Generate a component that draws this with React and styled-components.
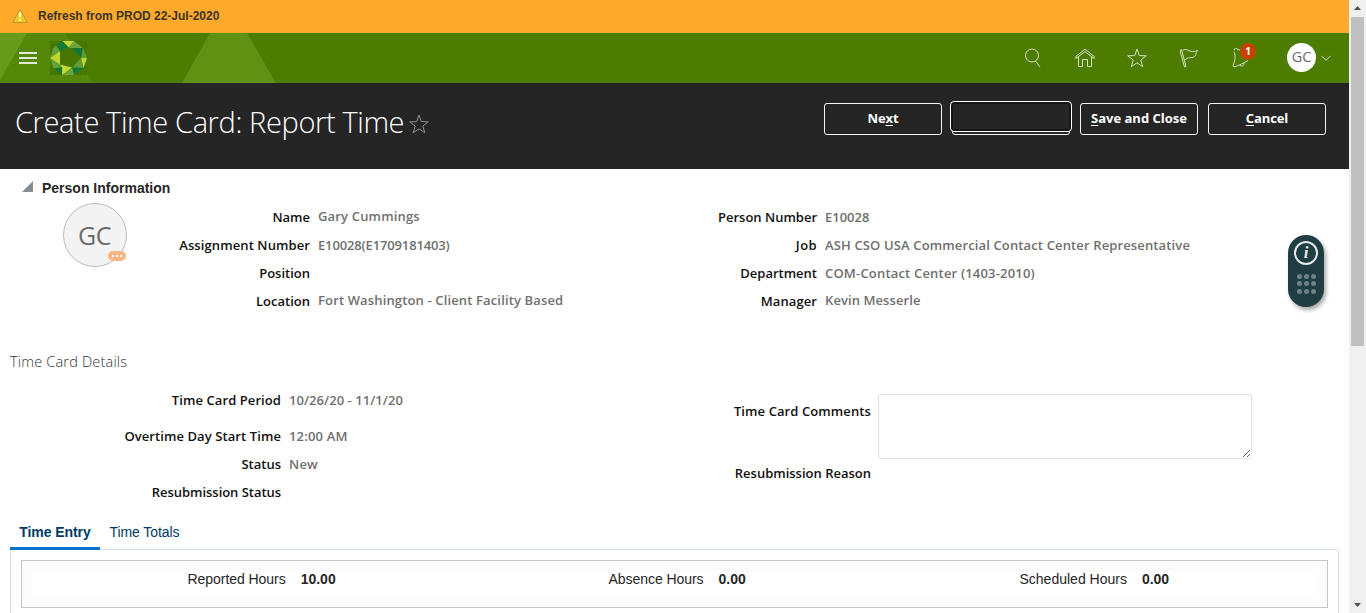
import React from "react";
import styled, { createGlobalStyle } from "styled-components";

const GlobalStyle = createGlobalStyle`
  *, *::before, *::after { box-sizing: border-box; }
  html, body { margin: 0; padding: 0; overflow: hidden; background: #fff; }
  body { font-family: "Liberation Sans", Arial, sans-serif; font-size: 14px; color: #262626; }
`;

const SEGOE = '"Open Sans", "Noto Sans", sans-serif';

const Shell = styled.div`
  display: flex;
  width: 1366px;
  height: 613px;
  overflow: hidden;
`;

const Page = styled.div`
  position: relative;
  width: 1349px;
  height: 613px;
  overflow: hidden;
`;

const Banner = styled.div`
  display: flex;
  align-items: center;
  height: 33px;
  padding: 0 0 2px 12px;
  gap: 10px;
  background: #ffaa2b;
  font-size: 12px;
  font-weight: bold;
  color: #3c3527;
`;

const NavBar = styled.nav`
  position: relative;
  display: flex;
  align-items: center;
  justify-content: space-between;
  height: 50px;
  padding: 0 18px 0 19px;
  background: #4c7d00;
`;

const NavBackdrop = styled.svg`
  position: absolute;
  left: 0;
  top: 0;
`;

const NavLeft = styled.div`
  position: relative;
  display: flex;
  align-items: center;
  gap: 13px;
`;

const Burger = styled.div`
  display: flex;
  flex-direction: column;
  gap: 3px;
  width: 18px;
`;

const BurgerLine = styled.span`
  height: 2px;
  background: #e3ebd8;
`;

const NavIcons = styled.div`
  position: relative;
  display: flex;
  align-items: center;
  padding-bottom: 1px;
`;

const IconSlot = styled.div`
  position: relative;
  display: flex;
  justify-content: center;
  align-items: center;
  width: 52px;
  height: 24px;
`;

const CountBadge = styled.span`
  position: absolute;
  left: 25px;
  top: -3px;
  width: 16px;
  height: 17px;
  border-radius: 50%;
  background: #c74200;
  color: #fff;
  font: 700 10px/17px ${SEGOE};
  text-align: center;
`;

const UserMenu = styled.div`
  display: flex;
  align-items: center;
  gap: 5px;
  margin-left: 20px;
`;

const SmallAvatar = styled.div`
  width: 29px;
  height: 29px;
  border-radius: 50%;
  background: #fff;
  color: #6c6c6c;
  font: 400 14.5px/28px ${SEGOE};
  letter-spacing: -0.2px;
  text-align: center;
`;

const TitleBar = styled.header`
  display: flex;
  justify-content: space-between;
  height: 86px;
  padding: 18px 23px 0 15px;
  background: #252525;
`;

const Title = styled.h1`
  display: flex;
  align-items: center;
  gap: 5px;
  height: 44px;
  margin: -1px 0 0;
  color: #fff;
  font: 300 29px/44px ${SEGOE};
  letter-spacing: ${(p) => p.$track || 0}px;
  white-space: nowrap;
  svg { margin-top: 3px; }
`;

const Actions = styled.div`
  display: flex;
  gap: 10px;
  padding-top: 2px;
`;

const ActionButton = styled.button`
  width: 118px;
  height: 32px;
  padding: 0 0 2px;
  border: 1px solid #f4f4f4;
  border-radius: 3px;
  background: #252525;
  color: #fff;
  font: 700 13px/28px ${SEGOE};
  letter-spacing: ${(p) => p.$track || 0}px;
  white-space: nowrap;
  u { text-underline-offset: 2px; }
`;

const FocusedSlot = styled.div`
  position: relative;
  display: flex;
`;

const FocusRing = styled.span`
  position: absolute;
  left: -2px;
  top: -2px;
  width: 122px;
  height: 31px;
  border: 1px solid #fff;
  border-radius: 4px;
  background: #252525;
  box-shadow: inset 0 0 0 2px #141414;
`;

const SectionHead = styled.div`
  display: flex;
  align-items: center;
  gap: 9px;
  height: 34px;
  padding: 4px 0 0 22px;
  font-weight: bold;
  font-size: 14px;
  svg { margin-top: -3px; }
`;

const Person = styled.section`
  display: flex;
  height: 142px;
`;

const AvatarColumn = styled.div`
  width: 127px;
  padding-left: 63px;
`;

const Avatar = styled.div`
  position: relative;
  width: 64px;
  height: 64px;
  padding-right: 1px;
  border: 1px solid #bcbcbc;
  border-radius: 50%;
  background: #f3f3f3;
  color: #6c6c6c;
  font: 400 25px/63px ${SEGOE};
  letter-spacing: -0.5px;
  text-align: center;
`;

const Presence = styled.span`
  position: absolute;
  left: 44px;
  top: 47px;
  display: flex;
  align-items: center;
  justify-content: center;
  gap: 2px;
  width: 18px;
  height: 10px;
  border-radius: 5px;
  background: #fbb582;
`;

const PresenceDot = styled.i`
  width: 2px;
  height: 2px;
  background: #fff;
`;

const Fields = styled.dl`
  width: ${(p) => p.$width}px;
  margin: 0;
  padding-top: ${(p) => p.$top || 0}px;
`;

const FieldRow = styled.div`
  display: flex;
  gap: 8px;
  height: ${(p) => p.$height || 28}px;
  font: 600 13px/28px ${SEGOE};
  white-space: nowrap;
`;

const Label = styled.dt`
  width: ${(p) => p.$width}px;
  color: #111;
  text-align: right;
  letter-spacing: ${(p) => p.$track || 0}px;
`;

const Value = styled.dd`
  margin: ${(p) => -(p.$lift || 0)}px 0 0;
  color: #6f6f6f;
  letter-spacing: ${(p) => p.$track || 0}px;
`;

const SectionTitle = styled.h2`
  height: 33px;
  margin: 0;
  padding-left: 10px;
  color: #333;
  font: 300 14.5px/33px ${SEGOE};
  letter-spacing: ${(p) => p.$track || 0}px;
`;

const Details = styled.section`
  display: flex;
  height: 138px;
`;

const CommentRow = styled.div`
  display: flex;
  gap: 7px;
  height: 65px;
  font: 600 13px/34px ${SEGOE};
`;

const CommentBox = styled.textarea`
  width: 374px;
  height: 65px;
  margin: 0;
  border: 1px solid #dfe4e3;
  border-radius: 2px;
  background: #fff;
  resize: both;
  outline: none;
`;

const TabStrip = styled.div`
  display: flex;
  height: 34px;
  padding-left: 10px;
  position: relative;
`;

const Tab = styled.div`
  width: ${(p) => p.$width}px;
  height: 34px;
  border-bottom: ${(p) => (p.$active ? "3px solid #0572ce" : "0")};
  color: #003a66;
  font-size: 14px;
  line-height: 33px;
  font-weight: ${(p) => (p.$active ? "bold" : "normal")};
  letter-spacing: -0.08px;
  text-align: center;
  white-space: nowrap;
`;

const TabPanel = styled.div`
  width: 1329px;
  height: 70px;
  margin: -1px 0 0 10px;
  padding: 10px;
  border: 1px solid #d6dfe6;
  border-radius: 0 2px 0 0;
`;

const Summary = styled.div`
  width: 1307px;
  height: 48px;
  padding: 10px 10px;
  border: 1px solid #c4c8c9;
  background: #fbfbfb;
`;

const SummaryRow = styled.div`
  display: grid;
  grid-template-columns: 421px 411px 1fr;
  height: 26px;
  padding-left: 155.5px;
  background: #fff;
  line-height: 17px;
`;

const Total = styled.div`
  display: flex;
  gap: 15px;
  letter-spacing: ${(p) => p.$track || 0}px;
  b { letter-spacing: 0; }
`;

const HelpDock = styled.aside`
  position: absolute;
  left: 1288px;
  top: 235px;
  display: flex;
  flex-direction: column;
  align-items: center;
  gap: 9px;
  width: 36px;
  height: 72px;
  padding-top: 6px;
  border-radius: 18px;
  background: #1f3d42;
  box-shadow: 2px 3px 4px rgba(0, 0, 0, 0.35);
`;

const InfoRing = styled.div`
  width: 24px;
  height: 24px;
  border: 2px solid #e4e9ea;
  border-radius: 50%;
  color: #e4e9ea;
  font: italic bold 17px/19px "Liberation Serif", serif;
  text-align: center;
`;

const DotGrid = styled.div`
  display: grid;
  grid-template-columns: repeat(3, 5px);
  gap: 2.4px 2px;
`;

const Dot = styled.i`
  width: 5px;
  height: 5px;
  border-radius: 50%;
  background: #6e8386;
`;

const Scrollbar = styled.div`
  display: flex;
  flex-direction: column;
  align-items: center;
  justify-content: space-between;
  width: 17px;
  height: 613px;
  padding: 0 0 6px;
  background: #f0f0f0;
`;

const ScrollTop = styled.div`
  display: flex;
  flex-direction: column;
  align-items: center;
  gap: 7px;
  padding-top: 6px;
`;

const Thumb = styled.div`
  width: 13px;
  height: 329px;
  background: #c0c0c0;
`;

const stroke = { fill: "none", stroke: "#d5e2c2", strokeWidth: 1 };
const STAR = "M10 1 L12.3 7.6 L19.3 7.8 L13.8 12 L15.8 18.8 L10 14.8 L4.2 18.8 L6.2 12 L0.7 7.8 L7.7 7.6 Z";

const Warning = () => (
  <svg width="16" height="16" viewBox="0 0 16 16">
    <path d="M8 1 L15.3 14.5 H0.7 Z" fill="#f8c51c" stroke="#bd962c" strokeLinejoin="round" />
    <path d="M7 4.6h2v5H7zM7 11h2v2H7z" fill="#fff" />
  </svg>
);

const Logo = () => (
  <svg width="37" height="34" viewBox="0 0 37 34">
    <rect width="37" height="34" fill="#487700" />
    <path d="M12.500 0L19 6.500 10 10 6 4.500Z" fill="#167a35" />
    <path d="M12.500 0H24L19 6.500Z" fill="#c1d72f" />
    <path d="M24 0L33 7H19Z" fill="#6ba43a" />
    <path d="M22 7H33L31.500 17Z" fill="#127534" />
    <path d="M33 7L37 17H31Z" fill="#5e9e38" />
    <path d="M31 17H37L33.500 27Z" fill="#c1d72f" />
    <path d="M31 17L33.500 27 22 26.500Z" fill="#5e9e38" />
    <path d="M22 26.500L33.500 27 24 34Z" fill="#167a35" />
    <path d="M10 23.500L22 26.500 12.500 34Z" fill="#c1d72f" />
    <path d="M22 26.500L24 34H12.500Z" fill="#6ba43a" />
    <path d="M3.500 27.500L12 26V34Z" fill="#127534" />
    <path d="M0 17L10 23.500 12 26 3.500 27.500Z" fill="#64a13b" />
    <path d="M0 17L10 10V23.500Z" fill="#c1d72f" />
    <path d="M3.500 7L6 4.500 10 10 0 17Z" fill="#64a13b" />
  </svg>
);

const Star = ({ size, color }) => (
  <svg width={size} height={size} viewBox="0 0 20 20">
    <path d={STAR} {...stroke} stroke={color} />
  </svg>
);

const Field = ({ label, value, width, track, valueTrack, lift, height }) => (
  <FieldRow $height={height}>
    <Label $width={width} $track={track}>{label}</Label>
    <Value $track={valueTrack} $lift={lift}>{value}</Value>
  </FieldRow>
);

export default function App() {
  return (
    <Shell>
      <GlobalStyle />
      <Page>
        <Banner><Warning />Refresh from PROD 22-Jul-2020</Banner>
        <NavBar>
          <NavBackdrop width="300" height="50">
            <path d="M0 0H65L93 50H0Z" fill="#558808" />
            <path d="M0 0H27L0 47Z" fill="#679a18" />
            <path d="M210 0H247L276 50H182Z" fill="#609112" />
          </NavBackdrop>
          <NavLeft>
            <Burger><BurgerLine /><BurgerLine /><BurgerLine /></Burger>
            <Logo />
          </NavLeft>
          <NavIcons>
            <IconSlot>
              <svg width="20" height="20" viewBox="0 0 20 20">
                <circle cx="9" cy="7.500" r="6.500" {...stroke} /><path d="M12.500 13L17 19" {...stroke} />
              </svg>
            </IconSlot>
            <IconSlot>
              <svg width="20" height="20" viewBox="0 0 20 20">
                <path d="M.8 8.500L10 1.200l9.200 7.300v2L10 3.700.8 10.500ZM3.500 9v9.500h4V11.500h5v7h4V9" {...stroke} />
              </svg>
            </IconSlot>
            <IconSlot><Star size={20} color="#d5e2c2" /></IconSlot>
            <IconSlot>
              <svg width="20" height="20" viewBox="0 0 20 20">
                <path d="M1 2.500L2.500 1.500 7 18.500 5.500 19ZM3.500 2.500C8-1 10 6 18.800 2.500 16 5 18 9 13 9.500 10 10 9 9 6 12" {...stroke} />
              </svg>
            </IconSlot>
            <IconSlot>
              <svg width="20" height="20" viewBox="0 0 20 20">
                <path d="M3.500 2.500a1.600 1.600 0 1 1 3-.8L9 2M3 4C5 8 4 13 2 17.500L3 19C8 17.500 12 15.500 17 12.500M9 17c1 2.500 4.500 1 4-2" {...stroke} />
              </svg>
              <CountBadge>1</CountBadge>
            </IconSlot>
            <UserMenu>
              <SmallAvatar>GC</SmallAvatar>
              <svg width="10" height="6" viewBox="0 0 10 6"><path d="M.5.800L5 5.300 9.500.800" {...stroke} /></svg>
            </UserMenu>
          </NavIcons>
        </NavBar>
        <TitleBar>
          <Title $track={-0.38}>Create Time Card: Report Time<Star size={20} color="#8f8f8f" /></Title>
          <Actions>
            <ActionButton $track={-0.15}>Ne<u>x</u>t</ActionButton>
            <FocusedSlot><ActionButton aria-label="Save" /><FocusRing /></FocusedSlot>
            <ActionButton $track={0}><u>S</u>ave and Close</ActionButton>
            <ActionButton $track={-0.1}><u>C</u>ancel</ActionButton>
          </Actions>
        </TitleBar>
        <SectionHead>
          <svg width="11" height="11"><path d="M11 0V11H0Z" fill="#878d90" /></svg>
          Person Information
        </SectionHead>
        <Person>
          <AvatarColumn>
            <Avatar>GC<Presence><PresenceDot /><PresenceDot /><PresenceDot /></Presence></Avatar>
          </AvatarColumn>
          <Fields $width={510}>
            <Field width={183} label="Name" value="Gary Cummings" valueTrack={0.17} lift={1} />
            <Field width={183} label="Assignment Number" track={0.1} value="E10028(E1709181403)" valueTrack={-0.14} />
            <Field width={183} label="Position" />
            <Field width={183} label="Location" value="Fort Washington - Client Facility Based" valueTrack={0.14} lift={1} />
          </Fields>
          <Fields $width={600}>
            <Field width={180} label="Person Number" value="E10028" />
            <Field width={180} label="Job" track={0.4} value="ASH CSO USA Commercial Contact Center Representative" valueTrack={0.135} />
            <Field width={180} label="Department" value="COM-Contact Center (1403-2010)" valueTrack={0.19} />
            <Field width={180} label="Manager" track={0.1} value="Kevin Messerle" valueTrack={0.08} lift={1} />
          </Fields>
        </Person>
        <SectionTitle $track={0.18}>Time Card Details</SectionTitle>
        <Details>
          <Fields $width={637} $top={8}>
            <Field width={281} height={36} label="Time Card Period" track={0.08} value="10/26/20 - 11/1/20" valueTrack={0.05} />
            <Field width={281} label="Overtime Day Start Time" track={0.09} value="12:00 AM" valueTrack={0.18} />
            <Field width={281} label="Status" value="New" valueTrack={0.2} />
            <Field width={281} label="Resubmission Status" track={-0.04} />
          </Fields>
          <Fields $width={700} $top={16}>
            <CommentRow><Label $width={234} $track={0.1}>Time Card Comments</Label><CommentBox /></CommentRow>
            <Field width={234} label="Resubmission Reason" />
          </Fields>
        </Details>
        <TabStrip>
          <Tab $active $width={90}>Time Entry</Tab>
          <Tab $width={89}>Time Totals</Tab>
        </TabStrip>
        <TabPanel>
          <Summary>
            <SummaryRow>
              <Total $track={-0.05}>Reported Hours <b>10.00</b></Total>
              <Total $track={-0.05}>Absence Hours <b>0.00</b></Total>
              <Total>Scheduled Hours <b>0.00</b></Total>
            </SummaryRow>
          </Summary>
        </TabPanel>
        <HelpDock>
          <InfoRing>i</InfoRing>
          <DotGrid>{Array.from({ length: 9 }, (_, i) => <Dot key={i} />)}</DotGrid>
        </HelpDock>
      </Page>
      <Scrollbar>
        <ScrollTop>
          <svg width="7" height="4"><path d="M0 4L3.500 0 7 4Z" fill="#505050" /></svg>
          <Thumb />
        </ScrollTop>
        <svg width="7" height="4"><path d="M0 0H7L3.500 4Z" fill="#505050" /></svg>
      </Scrollbar>
    </Shell>
  );
}
